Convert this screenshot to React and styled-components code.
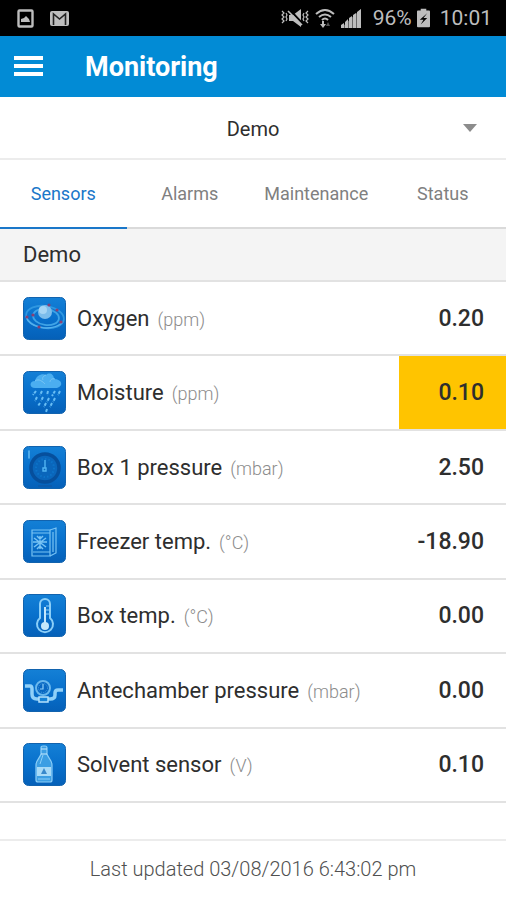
import React, { useState } from "react";
import styled, { createGlobalStyle } from "styled-components";

const colors = {
    header: "#028bd5",
    accent: "#1a77c9",
    warning: "#ffc400",
    text: "#2e2e2e",
    muted: "#808080",
    unit: "#8c8c8c",
    line: "#e2e2e2",
    lightLine: "#ececec",
    section: "#f4f4f4",
    status: "#bdbdbd"
};

const GlobalStyle = createGlobalStyle`
    * {
        box-sizing: border-box;
    }
    body {
        margin: 0;
        background: #fff;
        color: ${colors.text};
        font-family: Roboto, "Liberation Sans", sans-serif;
    }
    button, select {
        font-family: inherit;
    }
`;

const Page = styled.div`
    display: flex;
    flex-direction: column;
    min-height: 100vh;
`;

const StatusBar = styled.div`
    display: flex;
    align-items: center;
    justify-content: space-between;
    height: 36px;
    padding: 0 14px 0 17px;
    background: #000;
    color: ${colors.status};
    font-size: 21px;
    line-height: 36px;
    svg {
        display: block;
    }
`;

const StatusGroup = styled.div`
    display: flex;
    align-items: center;
    gap: ${props => props.$gap}px;
`;

const Battery = styled.span`
    display: flex;
    align-items: center;
    gap: 5px;
    margin: 0 4px 0 6px;
`;

const Header = styled.header`
    display: flex;
    align-items: center;
    gap: 42px;
    height: 61px;
    padding: 0 14px;
    background: ${colors.header};
    color: #fff;
`;

const MenuButton = styled.button`
    display: flex;
    padding: 0;
    border: 0;
    background: none;
    color: inherit;
    cursor: pointer;
`;

const Title = styled.h1`
    margin: 0;
    font-size: 27px;
    font-weight: 700;
    line-height: 32px;
`;

const Picker = styled.div`
    position: relative;
    border-bottom: 2px solid ${colors.lightLine};
    svg {
        position: absolute;
        top: 27px;
        right: 29px;
        pointer-events: none;
    }
`;

const PickerSelect = styled.select`
    display: block;
    width: 100%;
    height: 61px;
    padding: 2px 0 0;
    border: 0;
    background: none;
    color: ${colors.text};
    font-size: 20px;
    text-align: center;
    text-align-last: center;
    appearance: none;
`;

const Tabs = styled.nav`
    display: grid;
    grid-template-columns: repeat(4, 1fr);
    height: 69px;
`;

const Tab = styled.button`
    padding: 0;
    border: 0;
    border-bottom: 2px solid ${props => props.$active ? colors.accent : "#dadada"};
    background: none;
    color: ${props => props.$active ? colors.accent : colors.muted};
    font-size: 18px;
    cursor: pointer;
`;

const SectionTitle = styled.h2`
    margin: 0;
    padding: 0 23px;
    border-bottom: 2px solid ${colors.line};
    background: ${colors.section};
    font-size: 22px;
    font-weight: 400;
    line-height: 51px;
`;

const SensorList = styled.ul`
    display: flex;
    flex: 1;
    flex-direction: column;
    margin: 0;
    padding: 0;
    list-style: none;
`;

const SensorRow = styled.li`
    display: flex;
    flex: 1;
    align-items: center;
    min-height: 74px;
    padding-left: 23px;
    border-bottom: 2px solid ${colors.line};
`;

const SensorName = styled.span`
    display: flex;
    flex: 1;
    align-items: baseline;
    gap: 8px;
    margin-left: 11px;
    font-size: 22px;
`;

const Unit = styled.span`
    color: ${colors.unit};
    font-size: 18px;
    font-weight: 300;
`;

const SensorValue = styled.span`
    display: flex;
    align-items: center;
    align-self: stretch;
    justify-content: flex-end;
    min-width: 107px;
    padding-right: 22px;
    background: ${props => props.$warning ? colors.warning : "transparent"};
    font-size: 23px;
    font-weight: 500;
`;

const Footer = styled.footer`
    margin-top: 36px;
    padding-bottom: 2px;
    border-top: 2px solid ${colors.lightLine};
    color: #505050;
    font-size: 20px;
    font-weight: 300;
    line-height: 57px;
    text-align: center;
`;

const IconTile = styled.svg`
    display: block;
    flex: none;
    width: 43px;
    height: 43px;
`;

const OxygenIcon = () => (
    <g fill="none">
        <ellipse cx="22" cy="20" rx="19" ry="11" stroke="#2f97e0" strokeWidth="1.8" transform="rotate(8 22 20)" />
        <ellipse cx="23" cy="20" rx="13" ry="8" stroke="#3fa3e6" strokeWidth="1.8" transform="rotate(8 23 20)" />
        <path d="M3 19c3 12 24 16 36 7" stroke="#55b0ec" strokeWidth="1.4" />
        <circle cx="22" cy="15" r="7" fill="#7cbdec" />
        <circle cx="20" cy="13" r="4" fill="#a6d5f5" />
        <g fill="#8a3f74">
            <circle cx="26" cy="8" r="1.6" />
            <circle cx="34" cy="13" r="1.6" />
            <circle cx="10" cy="18" r="1.6" />
            <circle cx="4" cy="20" r="1.6" />
            <circle cx="38" cy="25" r="1.6" />
            <circle cx="16" cy="30" r="1.6" />
        </g>
    </g>
);

const MoistureIcon = () => (
    <g>
        <path d="M12 17c-6 0-6-7 0-7 1-5 7-8 11-6 3-3 8-1 8 4 8 0 10 7 3 9z" fill="#4baef0" />
        <path d="M12 10c4-3 8 1 10 3m1-9c-3 1-4 3-3 5m12-1c-3-1-5 1-5 3" fill="none" stroke="#77c5f5" />
        <path
            d="M13 20l-3 4m9-4l-2 4m8-4l-1 4m8-4l-3 5m8-5l-2 4M14 26l-2 4m8-4l-2 4m8-3l-2 4m8-4l-2 4M17 32l-2 3m8-3l-2 4m8-4l-2 4M24 38l-1 3"
            fill="none"
            stroke="#68bdf4"
            strokeWidth="2"
            strokeDasharray="3 1"
        />
    </g>
);

const GaugeIcon = () => (
    <g fill="none">
        <circle cx="22" cy="22" r="14" fill="#0a66bb" stroke="#064f9c" strokeWidth="3.5" />
        <circle cx="22" cy="22" r="9" stroke="#0d74c9" strokeWidth="2" strokeDasharray="1.5 2" />
        <path d="M22 14v8m-2 0h3v3h-3z" stroke="#52b4f2" strokeWidth="1.4" />
        <path d="M6 5v7" stroke="#60b8f2" strokeWidth="1.6" strokeLinecap="round" />
        <path d="M15 40h14" stroke="#0b5bac" strokeWidth="2" />
    </g>
);

const FreezerIcon = () => (
    <g fill="none" stroke="#78c3f4" strokeWidth="1.2">
        <path d="M9 10h18v26H9zM9 13h18M10 32h17" />
        <path d="M27 10l6-2v25l-6 3M30 12v20" />
        <path d="M17 16v13M11 18l12 9M23 18l-12 9M14 16l3 3 3-3M14 29l3-3 3 3M10 22h14" strokeWidth="1.5" />
    </g>
);

const ThermometerIcon = () => (
    <g fill="none">
        <path d="M17 24V10a5 5 0 0 1 10 0v14a8 8 0 1 1-10 0z" stroke="#8bcef8" strokeWidth="2" />
        <path d="M22 13v17" stroke="#c4e7fb" strokeWidth="2" />
        <circle cx="22" cy="32" r="4" fill="#c4e7fb" />
        <path d="M26 12h-3m3 4h-3m3 4h-3" stroke="#8bcef8" />
    </g>
);

const AntechamberIcon = () => (
    <g fill="none">
        <path d="M2 17h5q2 0 2 3v5q0 5 5 5h13q5 0 5-4v-2q0-3 3-3h5" stroke="#90d0f8" strokeWidth="3.5" />
        <circle cx="20" cy="19" r="7" fill="#0867c2" stroke="#69b8ee" strokeWidth="2" />
        <circle cx="20" cy="19" r="4.5" stroke="#4c9fde" strokeDasharray="1 1" />
        <path d="M20 15v5h-3" stroke="#90d0f8" strokeWidth="1.2" />
        <path d="M16 28h9v5h-9z" fill="#1682d6" stroke="#b5e1fb" strokeWidth="1.5" />
    </g>
);

const SolventIcon = () => (
    <g>
        <path d="M18 5q0-2 2-2h2q2 0 2 2v6c1 4 5 6 5 11v15q0 2-2 2H15q-2 0-2-2V22c0-5 4-7 5-11z" fill="#3c9ee3" stroke="#8bcef8" strokeWidth="1.2" />
        <path d="M18 6h6M18 11h6" stroke="#c8eafd" strokeWidth="1.2" />
        <path d="M14 24h14v9H14z" fill="#a8daf7" />
        <path d="M21 25l3 6h-6z" fill="#3989cb" />
        <path d="M20 12l-3 9M15 36h12" fill="none" stroke="#8bcef8" />
    </g>
);

const sensors = [
    { name: "Oxygen", unit: "ppm", value: "0.20", Icon: OxygenIcon },
    { name: "Moisture", unit: "ppm", value: "0.10", Icon: MoistureIcon, warning: true },
    { name: "Box 1 pressure", unit: "mbar", value: "2.50", Icon: GaugeIcon },
    { name: "Freezer temp.", unit: "°C", value: "-18.90", Icon: FreezerIcon },
    { name: "Box temp.", unit: "°C", value: "0.00", Icon: ThermometerIcon },
    { name: "Antechamber pressure", unit: "mbar", value: "0.00", Icon: AntechamberIcon },
    { name: "Solvent sensor", unit: "V", value: "0.10", Icon: SolventIcon }
];

const tabs = ["Sensors", "Alarms", "Maintenance", "Status"];

const PhoneStatus = () => (
    <StatusBar>
        <StatusGroup $gap={16}>
            <svg width="17" height="19" viewBox="0 0 17 19">
                <rect x="1.5" y="1.5" width="14" height="16" rx="1" fill="none" stroke={colors.status} strokeWidth="2.4" />
                <path d="M4 13V10l3-1 2-2 3 3 1 3z" fill={colors.status} />
            </svg>
            <svg width="19" height="15" viewBox="0 0 19 15">
                <rect width="19" height="15" rx="2" fill={colors.status} />
                <path d="M3.5 14V3l6 5 6-5v11" fill="none" stroke="#222" strokeWidth="1.6" />
            </svg>
        </StatusGroup>
        <StatusGroup $gap={6}>
            <svg width="28" height="20" viewBox="0 0 28 20">
                <path d="M8 7h4l8-6v18l-8-6H8z" fill={colors.status} />
                <path d="M8 1l14 15" stroke="#000" strokeWidth="2" />
                <path d="M7 3l14 14" stroke={colors.status} strokeWidth="1.6" />
                <path
                    d="M1 3l2 2-2 2 2 2-2 2 2 2-2 2M5 5l1 2-1 2 1 2-1 2M27 3l-2 2 2 2-2 2 2 2-2 2 2 2M23 5l-1 2 1 2-1 2 1 2"
                    fill="none"
                    stroke={colors.status}
                    strokeWidth="1.2"
                />
            </svg>
            <svg width="20" height="21" viewBox="0 0 20 21">
                <path d="M1 6q9-8 18 0M4 9q6-5 12 0M7 12q3-3 6 0" fill="none" stroke={colors.status} strokeWidth="2" />
                <path d="M5 16h2v-3h2v3h2l-3 4z" fill={colors.status} />
                <path d="M11 18h4l-2-4z" fill="#555" />
            </svg>
            <svg width="20" height="19" viewBox="0 0 20 19">
                <path d="M0 19L20 0v19z" fill="#666" />
                <path d="M0 19v-3l3-2v5zM4 19v-6l3-3v9zM8 19V9l3-2v12zM12 19V6l3-2v15zM16 19V3l4-3v19z" fill={colors.status} />
            </svg>
            <Battery>
                <span>96%</span>
                <svg width="13" height="20" viewBox="0 0 14 20">
                    <path d="M4 0h6v2h3q1 0 1 1v16q0 1-1 1H1q-1 0-1-1V3q0-1 1-1h3z" fill={colors.status} />
                    <path d="M11 5l-8 7h4l-3 5 7-7H7z" fill="#000" />
                </svg>
            </Battery>
            <span>10:01</span>
        </StatusGroup>
    </StatusBar>
);

const Sensor = ({ name, unit, value, warning, Icon }) => (
    <SensorRow>
        <IconTile viewBox="0 0 43 43" aria-hidden="true">
            <rect x="0.5" y="0.5" width="42" height="42" rx="5" fill="url(#tile)" stroke="#1263ae" />
            <Icon />
        </IconTile>
        <SensorName>{name}<Unit>({unit})</Unit></SensorName>
        <SensorValue $warning={warning}>{value}</SensorValue>
    </SensorRow>
);

const Gradients = styled.svg`
    position: absolute;
    width: 0;
    height: 0;
`;

const App = () => {
    const [active, setActive] = useState("Sensors");

    return (
        <Page>
            <GlobalStyle />
            <Gradients aria-hidden="true">
                <linearGradient id="tile" x1="0" y1="0" x2="0" y2="1">
                    <stop offset="0" stopColor="#1480d6" />
                    <stop offset="0.5" stopColor="#0870cc" />
                    <stop offset="1" stopColor="#0560b8" />
                </linearGradient>
            </Gradients>
            <PhoneStatus />
            <Header>
                <MenuButton aria-label="Menu">
                    <svg width="29" height="21" viewBox="0 0 29 21" fill="currentColor">
                        <path d="M0 0h29v4H0zM0 8h29v4H0zM0 16h29v4H0z" />
                    </svg>
                </MenuButton>
                <Title>Monitoring</Title>
            </Header>
            <Picker>
                <PickerSelect aria-label="System">
                    <option>Demo</option>
                </PickerSelect>
                <svg width="14" height="8" viewBox="0 0 14 8">
                    <path d="M0 0h14L7 8z" fill="#8c8c8c" />
                </svg>
            </Picker>
            <Tabs>
                {tabs.map(tab => (
                    <Tab key={tab} $active={tab === active} onClick={() => setActive(tab)}>{tab}</Tab>
                ))}
            </Tabs>
            <SectionTitle>Demo</SectionTitle>
            <SensorList>
                {sensors.map(sensor => <Sensor key={sensor.name} {...sensor} />)}
            </SensorList>
            <Footer>Last updated 03/08/2016 6:43:02 pm</Footer>
        </Page>
    );
};

export default App;
